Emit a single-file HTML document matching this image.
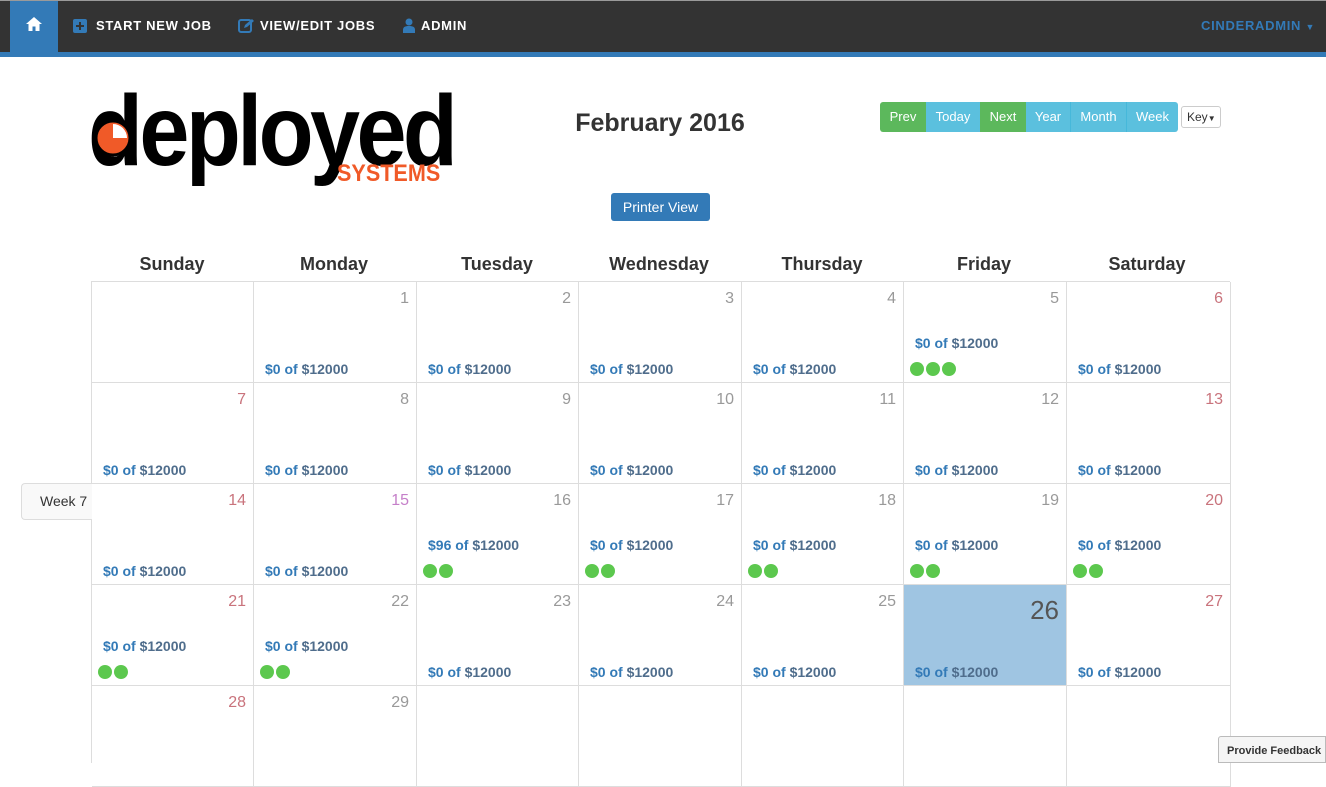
<!DOCTYPE html>
<html><head><meta charset="utf-8"><style>
*{box-sizing:border-box;margin:0;padding:0}
body{width:1326px;height:763px;overflow:hidden;background:#fff;font-family:"Liberation Sans",sans-serif;position:relative}
.nav{position:absolute;left:0;top:0;width:1326px;height:52px;background:#333;border-top:1px solid #9a9a9a}
.bar{position:absolute;left:0;top:52px;width:1326px;height:5px;background:#337ab7}
.home{position:absolute;left:10px;top:1px;width:48px;height:51px;background:#337ab7}
.ni{position:absolute;top:18px;color:#fff;font-weight:bold;font-size:13px;letter-spacing:0.7px}
.c{position:absolute;border-right:1px solid #ddd;border-bottom:1px solid #ddd}
.d{position:absolute;right:7px;top:8px;font-size:16px;color:#999}
.w{color:#c9737c}
.a{position:absolute;left:11px;top:79px;font-size:14px;font-weight:bold;color:#337ab7}
.a span{color:#4f6d8c}
.a.up{top:53px}
.dots{position:absolute;left:6px;top:80px;height:14px}
.dots i{display:inline-block;width:14px;height:14px;border-radius:7px;background:#5cc84e;margin-right:2px}
.hd{position:absolute;top:254px;font-size:18px;font-weight:bold;color:#333;text-align:center;width:162px}
.btn{position:absolute;top:102px;height:30px;color:#fff;font-size:13px;line-height:30px;text-align:center}
</style></head><body>
<div class="nav"></div><div class="bar"></div>
<div class="home"><svg style="position:absolute;left:15px;top:15px" width="18" height="16" viewBox="0 0 18 16"><path d="M9 1L1 8h2.5v7h4v-4.5h3V15h4V8H17z" fill="#fff"/></svg></div>
<svg style="position:absolute;left:73px;top:19px" width="14" height="14"><rect width="14" height="14" rx="2" fill="#337ab7"/><path d="M7 3v8M3 7h8" stroke="#333" stroke-width="2"/></svg>
<div class="ni" style="left:96px">START NEW JOB</div>
<svg style="position:absolute;left:238px;top:18px" width="16" height="15"><rect x="1" y="2" width="12" height="12" rx="2" fill="none" stroke="#337ab7" stroke-width="2"/><path d="M6 10l1-3 7-6 2 2-7 6z" fill="#337ab7"/></svg>
<div class="ni" style="left:260px">VIEW/EDIT JOBS</div>
<svg style="position:absolute;left:403px;top:18px" width="12" height="15"><circle cx="6" cy="4" r="3.5" fill="#337ab7"/><path d="M0 15v-3c0-3 2-4 6-4s6 1 6 4v3z" fill="#337ab7"/></svg>
<div class="ni" style="left:421px">ADMIN</div>
<div class="ni" style="left:1201px;color:#337ab7">CINDERADMIN <span style="font-size:9px">▼</span></div>

<div style="position:absolute;left:88px;top:81px;font-size:100px;font-weight:bold;letter-spacing:-4px;color:#000;line-height:100px;transform:scaleX(0.9);transform-origin:left top;white-space:nowrap">deployed</div>
<svg style="position:absolute;left:93px;top:118px" width="40" height="40"><circle cx="20" cy="20" r="17" fill="#f05a28"/><path d="M20 20V6A14 14 0 0 1 34 20z" fill="#fff"/><circle cx="20" cy="20" r="17" fill="none" stroke="#000" stroke-width="3"/></svg>
<div style="position:absolute;left:337px;top:160px;font-size:24px;font-weight:bold;color:#f05a28;transform:scaleX(0.9);transform-origin:left top">SYSTEMS</div>

<div style="position:absolute;left:560px;top:109px;width:200px;text-align:center;font-size:25px;font-weight:bold;color:#333">February 2016</div>
<div style="position:absolute;left:611px;top:193px;width:99px;height:28px;background:#337ab7;border-radius:3px;color:#fff;font-size:14px;line-height:28px;text-align:center">Printer View</div>

<div class="btn" style="left:880px;width:46px;background:#5cb85c;border-radius:3px 0 0 3px">Prev</div>
<div class="btn" style="left:926px;width:54px;background:#5bc0de">Today</div>
<div class="btn" style="left:980px;width:46px;background:#5cb85c">Next</div>
<div class="btn" style="left:1026px;width:45px;background:#5bc0de;border-right:1px solid #46b8da">Year</div>
<div class="btn" style="left:1071px;width:56px;background:#5bc0de;border-right:1px solid #46b8da">Month</div>
<div class="btn" style="left:1127px;width:51px;background:#5bc0de;border-radius:0 3px 3px 0">Week</div>
<div style="position:absolute;left:1181px;top:106px;width:40px;height:22px;border:1px solid #ccc;border-radius:3px;font-size:12px;line-height:20px;padding-left:5px;color:#333">Key<span style="font-size:8px">▼</span></div>

<div class="hd" style="left:91px">Sunday</div><div class="hd" style="left:253px">Monday</div><div class="hd" style="left:416px">Tuesday</div><div class="hd" style="left:578px">Wednesday</div><div class="hd" style="left:741px">Thursday</div><div class="hd" style="left:903px">Friday</div><div class="hd" style="left:1066px">Saturday</div>

<div style="position:absolute;left:91px;top:281px;width:1139px;height:1px;background:#ddd"></div>
<div style="position:absolute;left:91px;top:281px;width:1px;height:482px;background:#ddd"></div>
<div style="position:absolute;left:21px;top:483px;width:71px;height:37px;border:1px solid #ddd;border-right:none;border-radius:4px 0 0 4px;background:#f9f9f9;font-size:14px;line-height:35px;padding-left:18px;color:#333">Week 7</div>

<div id="g"></div>
<script>
var xs=[92,254,417,579,742,904,1067,1231],ys=[282,383,484,585,686,787];
var A='$0 of <span>$12000</span>';
var cells=[
[null,[1,A],[2,A],[3,A],[4,A],[5,A,3],[6,A]],
[[7,A],[8,A],[9,A],[10,A],[11,A],[12,A],[13,A]],
[[14,A],[15,A],[16,'$96 of <span>$12000</span>',2],[17,A,2],[18,A,2],[19,A,2],[20,A,2]],
[[21,A,2],[22,A,2],[23,A],[24,A],[25,A],[26,A,0,1],[27,A]],
[[28],[29],null,null,null,null,null]];
var h='';
for(var r=0;r<5;r++)for(var c=0;c<7;c++){
var v=cells[r][c];var s='left:'+xs[c]+'px;top:'+ys[r]+'px;width:'+(xs[c+1]-xs[c])+'px;height:101px;';
if(v&&v[3])s+='background:#9fc5e2;';
h+='<div class="c" style="'+s+'">';
if(v){var col=(c==0||c==6)?' w':'';var ds='';if(v[0]==15)ds='color:#c57fc9';
if(v[3])ds='font-size:26px;top:10px;color:#555';
h+='<div class="d'+col+'" style="'+ds+'">'+v[0]+'</div>';
if(v[1])h+='<div class="a'+(v[2]?' up':'')+'">'+v[1]+'</div>';
if(v[2]){h+='<div class="dots">';for(var i=0;i<v[2];i++)h+='<i></i>';h+='</div>';}}
h+='</div>';}
document.getElementById('g').innerHTML=h;
</script>
<div style="position:absolute;left:1218px;top:736px;width:108px;height:27px;background:#f5f5f5;border:1px solid #bbb;border-radius:3px 0 0 0;font-size:11px;font-weight:bold;color:#333;line-height:28px;padding-left:8px">Provide Feedback</div>
</body></html>
